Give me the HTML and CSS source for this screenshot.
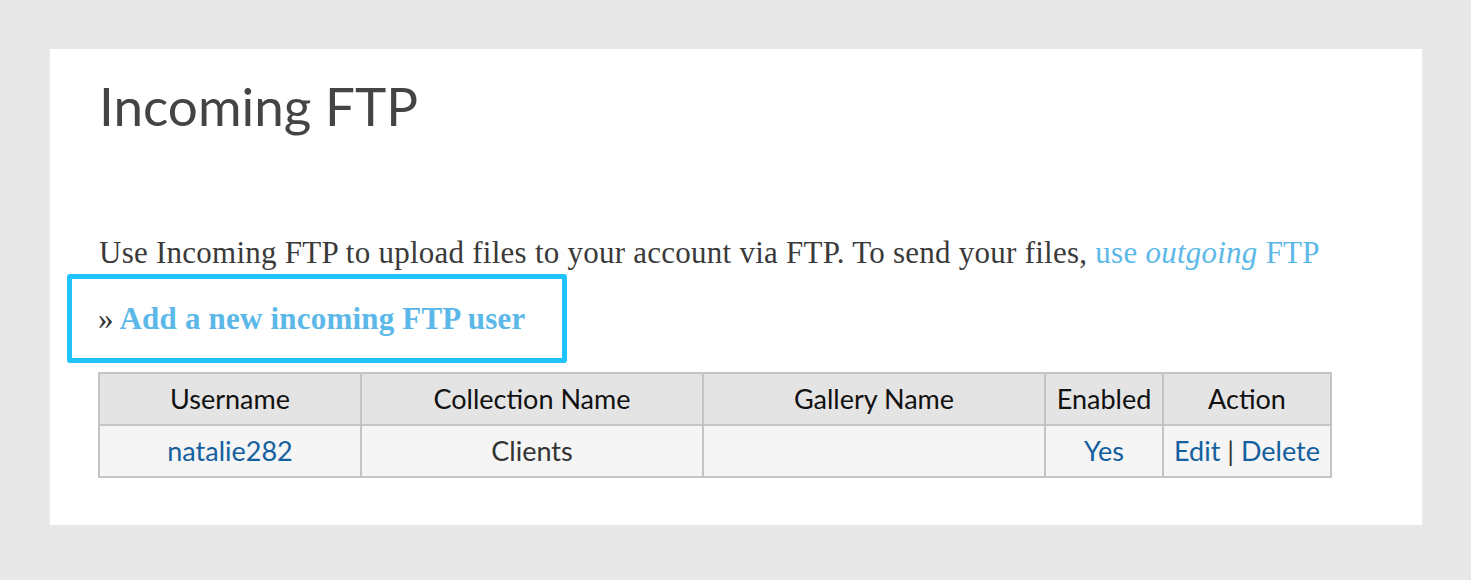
FILE: index.html
```html
<!DOCTYPE html>
<html lang="en">
<head>
  <meta charset="UTF-8" />
  <title>Incoming FTP</title>
  <link rel="stylesheet" href="styles.css">
</head>
<body>
  <div class="card">
    <h1>Incoming FTP</h1>
    <p class="intro">Use Incoming FTP to upload files to your account via FTP. To send your files, <a href="#">use <em>outgoing</em> FTP</a></p>
    <div class="add-box">
      &raquo; <a href="#" class="add-link">Add a new incoming FTP user</a>
    </div>
    <table class="users">
      <thead>
        <tr>
          <th class="c-user">Username</th>
          <th class="c-coll">Collection Name</th>
          <th class="c-gal">Gallery Name</th>
          <th class="c-en">Enabled</th>
          <th class="c-act">Action</th>
        </tr>
      </thead>
      <tbody>
        <tr>
          <td><a href="#">natalie282</a></td>
          <td>Clients</td>
          <td></td>
          <td><a href="#">Yes</a></td>
          <td><a href="#">Edit</a> | <a href="#">Delete</a></td>
        </tr>
      </tbody>
    </table>
  </div>
</body>
</html>
```

FILE: styles.css
```css
html, body {
  margin: 0;
  padding: 0;
}
body {
  background: #e8e8e8;
  padding: 49px 49px 55px 50px;
  font-family: Lato, sans-serif;
}
.card {
  background: #fff;
  width: 1323px;
  height: 476px;
  padding: 0 0 0 49px;
  box-sizing: content-box;
}
h1 {
  margin: 0;
  padding-top: 27px;
  font-family: Lato, sans-serif;
  font-weight: 400;
  font-size: 53px;
  line-height: 60px;
  color: #444;
}
.intro {
  margin: 99px 0 0 0;
  font-family: "Liberation Serif", serif;
  font-size: 31px;
  line-height: 36px;
  letter-spacing: 0.25px;
  color: #3a3a3a;
}
a {
  color: #5bb8e8;
  text-decoration: none;
}
.add-box {
  margin: 3px 0 9px -32px;
  width: 500px;
  height: 89px;
  border: 5px solid #1ec3ff;
  border-radius: 3px;
  box-sizing: border-box;
  display: flex;
  align-items: center;
  padding: 0 0 0 26px;
  font-family: "Liberation Serif", serif;
  font-size: 31px;
  color: #333;
}
.add-link {
  font-weight: bold;
  margin-left: 6px;
  letter-spacing: 0.2px;
}
.users {
  border-collapse: collapse;
  width: 1232px;
  margin-left: -1px;
  table-layout: fixed;
  font-size: 27px;
}
.users th, .users td {
  border: 2px solid #c4c4c4;
  text-align: center;
  height: 50px;
  line-height: 30px;
  padding: 0;
}
.users th {
  background: #e4e4e4;
  font-weight: 400;
  color: #111;
}
.users td {
  background: #f5f5f5;
  color: #333;
}
.users td a {
  color: #14609f;
}
.c-user { width: 260px; }
.c-coll { width: 340px; }
.c-gal { width: 340px; }
.c-en { width: 116px; }
.c-act { width: 166px; }
```
